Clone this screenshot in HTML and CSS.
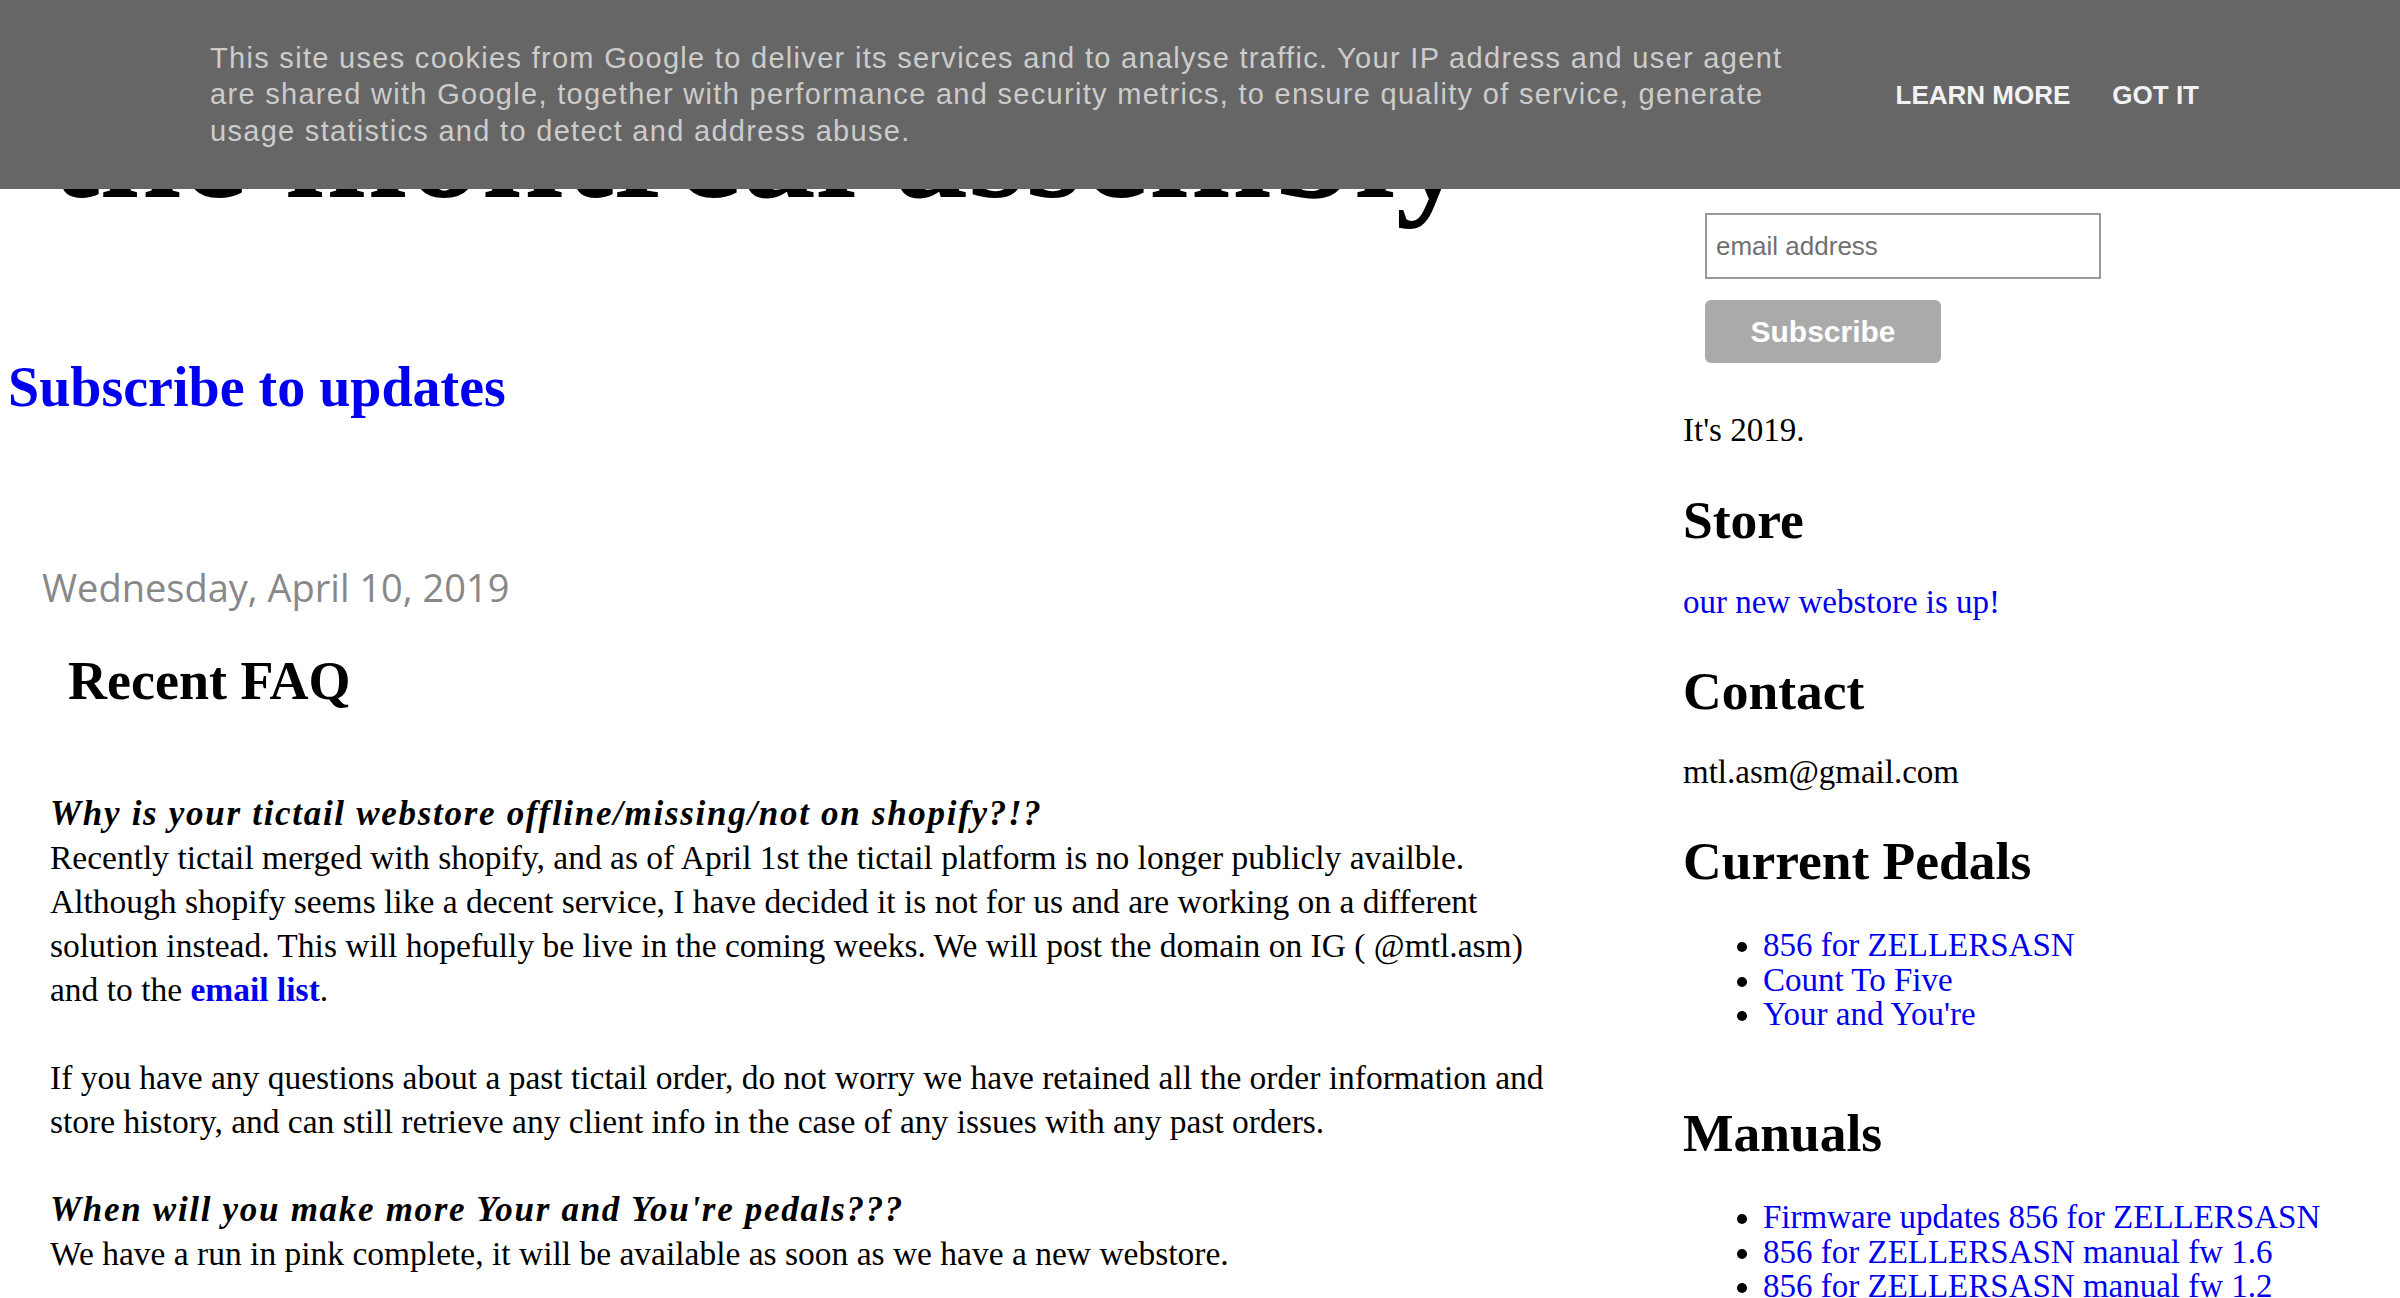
FILE: index.html
```html
<!DOCTYPE html>
<html lang="en">
<head>
<meta charset="utf-8">
<title>the montreal assembly</title>
<link rel="stylesheet" href="styles.css">
</head>
<body>
<div class="page">
  <main class="main">
    <header class="blog-header">
      <h1 class="blog-title">the montreal assembly</h1>
    </header>
    <h2 class="subscribe-link"><a href="#">Subscribe to updates</a></h2>
    <div class="date-header">Wednesday, April 10, 2019</div>
    <h3 class="post-title">Recent FAQ</h3>
    <div class="post-body">
      <b class="q"><i>Why is your tictail webstore offline/missing/not on shopify?!?</i></b><br>
      Recently tictail merged with shopify, and as of April 1st the tictail platform is no longer publicly availble.<br>
      Although shopify seems like a decent service, I have decided it is not for us and are working on a different<br>
      solution instead. This will hopefully be live in the coming weeks. We will post the domain on IG ( @mtl.asm)<br>
      and to the <a href="#"><b>email list</b></a>.<br>
      <br>
      If you have any questions about a past tictail order, do not worry we have retained all the order information and<br>
      store history, and can still retrieve any client info in the case of any issues with any past orders.<br>
      <br>
      <b class="q"><i>When will you make more Your and You're pedals???</i></b><br>
      We have a run in pink complete, it will be available as soon as we have a new webstore.
    </div>
  </main>
  <aside class="sidebar">
    <form class="follow">
      <input class="email" type="text" placeholder="email address">
      <button class="subscribe-btn" type="button">Subscribe</button>
    </form>
    <div class="widget">
      <p class="intro">It's 2019.</p>
    </div>
    <div class="widget">
      <h2 class="widget-title store-title">Store</h2>
      <p class="widget-text store-text"><a href="#">our new webstore is up!</a></p>
    </div>
    <div class="widget">
      <h2 class="widget-title">Contact</h2>
      <p class="widget-text">mtl.asm@gmail.com</p>
    </div>
    <div class="widget">
      <h2 class="widget-title">Current Pedals</h2>
      <ul class="link-list">
        <li><a href="#">856 for ZELLERSASN</a></li>
        <li><a href="#">Count To Five</a></li>
        <li><a href="#">Your and You're</a></li>
      </ul>
    </div>
    <div class="widget">
      <h2 class="widget-title">Manuals</h2>
      <ul class="link-list">
        <li><a href="#">Firmware updates 856 for ZELLERSASN</a></li>
        <li><a href="#">856 for ZELLERSASN manual fw 1.6</a></li>
        <li><a href="#">856 for ZELLERSASN manual fw 1.2</a></li>
      </ul>
    </div>
  </aside>
</div>
<div class="cookie-bar">
  <p class="cookie-text">This site uses cookies from Google to deliver its services and to analyse traffic. Your IP address and user agent<br>are shared with Google, together with performance and security metrics, to ensure quality of service, generate<br>usage statistics and to detect and address abuse.</p>
  <div class="cookie-actions">
    <a href="#">LEARN MORE</a>
    <a href="#">GOT IT</a>
  </div>
</div>
</body>
</html>
```

FILE: styles.css
```css
html, body {
  margin: 0;
  padding: 0;
}

body {
  font-family: "Liberation Serif", "Times New Roman", serif;
  color: #000;
  background: #fff;
}

a {
  color: #0000ee;
  text-decoration: none;
}

.page {
  display: flex;
  align-items: flex-start;
}

/* ---------- main column ---------- */
.main {
  flex: 0 0 1683px;
  display: flex;
  flex-direction: column;
  padding-top: 73px;
}

.blog-header {
  padding-left: 50px;
}

.blog-title {
  margin: 0;
  font-size: 148px;
  line-height: 148px;
  font-weight: bold;
  white-space: nowrap;
}

.subscribe-link {
  margin: 135.5px 0 0;
  padding-left: 8px;
  font-size: 56px;
  line-height: 60px;
  font-weight: bold;
}

.date-header {
  margin-top: 144.5px;
  padding-left: 42px;
  font-family: "Open Sans", "DejaVu Sans", sans-serif;
  font-size: 38px;
  line-height: 52px;
  color: #888;
}

.post-title {
  margin: 37.5px 0 0;
  padding-left: 68px;
  font-size: 54px;
  line-height: 60px;
  font-weight: bold;
}

.post-body {
  margin-top: 81.9px;
  padding-left: 50px;
  font-size: 33.5px;
  line-height: 44px;
}

.post-body .q {
  font-size: 35px;
  line-height: 42px;
  letter-spacing: 1.7px;
}

/* ---------- sidebar ---------- */
.sidebar {
  flex: 1 1 auto;
  display: flex;
  flex-direction: column;
  padding-top: 213px;
  font-size: 33px;
}

.follow {
  display: flex;
  flex-direction: column;
  align-items: flex-start;
  gap: 21px;
  margin: 0;
  padding-left: 22px;
}

.email {
  box-sizing: border-box;
  width: 396px;
  height: 66px;
  margin: 0;
  padding: 0 9px;
  border: 2px solid #999;
  border-radius: 0;
  font-family: "Liberation Sans", Arial, sans-serif;
  font-size: 26px;
  color: #333;
  outline: none;
}

.email::placeholder {
  color: #707070;
  opacity: 1;
}

.subscribe-btn {
  box-sizing: border-box;
  width: 236px;
  height: 63px;
  margin: 0;
  padding: 0;
  border: 0;
  border-radius: 6px;
  background: #aaa;
  color: #fff;
  font-family: "Liberation Sans", Arial, sans-serif;
  font-size: 30px;
  font-weight: bold;
}

.intro {
  margin: 47.4px 0 0;
  line-height: 40px;
}

.widget-title {
  margin: 38.2px 0 0;
  font-size: 53.5px;
  line-height: 60px;
  font-weight: bold;
}

.store-title {
  margin-top: 39.2px;
}

.widget-text {
  margin: 31.8px 0 0;
  line-height: 40px;
}

.store-text {
  margin-top: 32.8px;
}

.link-list {
  margin: 37.5px 0 33px;
  padding-left: 80px;
  line-height: 34.5px;
}

/* ---------- cookie notice ---------- */
.cookie-bar {
  position: fixed;
  top: 0;
  left: 0;
  right: 0;
  z-index: 10;
  box-sizing: border-box;
  height: 189px;
  padding: 0 201px 0 210px;
  display: flex;
  align-items: center;
  background: #666;
  font-family: "Liberation Sans", Arial, sans-serif;
}

.cookie-text {
  flex: 0 0 auto;
  margin: 0;
  font-size: 29px;
  line-height: 36.5px;
  letter-spacing: 1.3px;
  white-space: nowrap;
  color: #ccc;
}

.cookie-actions {
  margin-left: auto;
  display: flex;
  gap: 42px;
}

.cookie-actions a {
  color: #f2f2f2;
  font-size: 26px;
  line-height: 26px;
  font-weight: bold;
  white-space: nowrap;
}
```
